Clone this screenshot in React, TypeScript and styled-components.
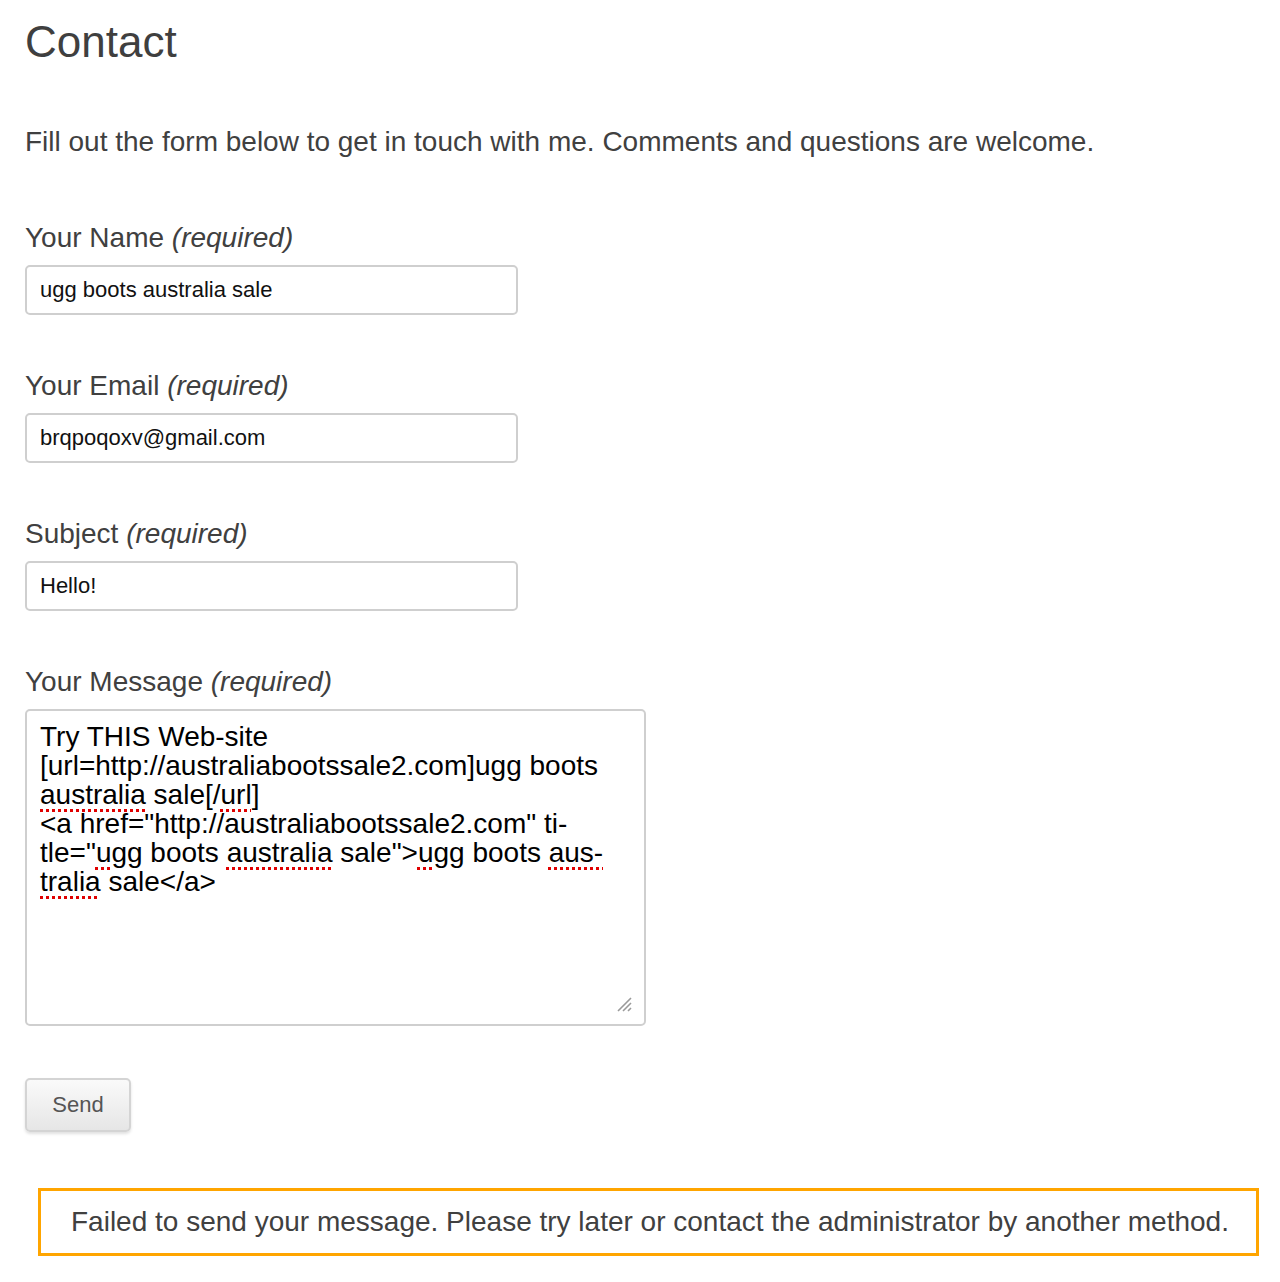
import React from "react";
import styled, { createGlobalStyle } from "styled-components";

const GlobalStyle = createGlobalStyle`
  html, body {
    margin: 0;
    padding: 0;
    background: #ffffff;
  }
  body {
    font-family: "Liberation Sans", Arial, Helvetica, sans-serif;
    color: #404040;
  }
`;

const Page = styled.main`
  padding: 14px 21px 20px 25px;
`;

const Title = styled.h1`
  margin: 0;
  font-size: 44px;
  line-height: 56px;
  font-weight: 400;
  color: #3f3f3f;
`;

const Intro = styled.p`
  margin: 56px 0 0;
  font-size: 28px;
  line-height: 32px;
  color: #404040;
`;

const Form = styled.form`
  margin-top: 64px;
  display: flex;
  flex-direction: column;
`;

const Field = styled.div`
  display: flex;
  flex-direction: column;
  align-items: flex-start;
  margin-bottom: 55px;
`;

const Label = styled.label`
  display: block;
  font-size: 28px;
  line-height: 32px;
  color: #404040;
  margin-bottom: 11px;
`;

const Req = styled.em`
  font-style: italic;
`;

const TextInput = styled.input`
  box-sizing: border-box;
  width: 493px;
  height: 50px;
  padding: 0 13px;
  border: 2px solid #cfcfcf;
  border-radius: 5px;
  background: #fff;
  font-family: "Liberation Sans", Arial, sans-serif;
  font-size: 22px;
  color: #111;
  outline: none;
`;

const MessageBox = styled.div`
  position: relative;
  box-sizing: border-box;
  width: 621px;
  height: 317px;
  padding: 11px 30px 8px 13px;
  border: 2px solid #cfcfcf;
  border-radius: 5px;
  background: #fff;
  font-size: 28px;
  line-height: 29px;
  color: #000;
  white-space: pre;
`;

const Misspelled = styled.span`
  text-decoration: underline dotted #e00000;
  text-decoration-thickness: 2.5px;
  text-underline-offset: 5px;
`;

const Grip = styled.svg`
  position: absolute;
  right: 12px;
  bottom: 12px;
  width: 20px;
  height: 20px;
`;

const SendButton = styled.button`
  align-self: flex-start;
  box-sizing: border-box;
  width: 106px;
  height: 54px;
  margin-top: -3px;
  border: 2px solid #d4d4d4;
  border-radius: 5px;
  background: linear-gradient(#fafafa, #e6e6e6);
  box-shadow: 0 2px 3px rgba(0, 0, 0, 0.12);
  font-family: "Liberation Sans", Arial, sans-serif;
  font-size: 22px;
  color: #555;
  cursor: pointer;
`;

const Alert = styled.div`
  box-sizing: border-box;
  margin: 56px 0 0 13px;
  height: 68px;
  border: 3px solid #ffa500;
  padding: 0 0 0 30px;
  display: flex;
  align-items: center;
  font-size: 28px;
  color: #404040;
  white-space: nowrap;
`;

export default function App() {
  return (
    <>
      <GlobalStyle />
      <Page>
        <Title>Contact</Title>
        <Intro>
          Fill out the form below to get in touch with me. Comments and questions are welcome.
        </Intro>
        <Form onSubmit={(e) => e.preventDefault()}>
          <Field>
            <Label htmlFor="name">
              Your Name <Req>(required)</Req>
            </Label>
            <TextInput id="name" defaultValue="ugg boots australia sale" />
          </Field>
          <Field>
            <Label htmlFor="email">
              Your Email <Req>(required)</Req>
            </Label>
            <TextInput id="email" defaultValue="brqpoqoxv@gmail.com" />
          </Field>
          <Field>
            <Label htmlFor="subject">
              Subject <Req>(required)</Req>
            </Label>
            <TextInput id="subject" defaultValue="Hello!" />
          </Field>
          <Field>
            <Label>
              Your Message <Req>(required)</Req>
            </Label>
            <MessageBox role="textbox" aria-multiline="true">
              {"Try THIS Web-site\n[url=http://australiabootssale2.com]ugg boots\n"}
              <Misspelled>australia</Misspelled>
              {" sale[/"}
              <Misspelled>url</Misspelled>
              {"]\n<a href=\"http://australiabootssale2.com\" ti-\ntle=\""}
              <Misspelled>ugg</Misspelled>
              {" boots "}
              <Misspelled>australia</Misspelled>
              {" sale\">"}
              <Misspelled>ugg</Misspelled>
              {" boots "}
              <Misspelled>aus-</Misspelled>
              {"\n"}
              <Misspelled>tralia</Misspelled>
              {" sale</a>"}
              <Grip viewBox="0 0 20 20" aria-hidden="true">
                <path d="M19 6 L6 19 M19 11 L11 19 M19 16 L16 19" stroke="#9a9a9a" strokeWidth="1.6" />
              </Grip>
            </MessageBox>
          </Field>
          <SendButton type="submit">Send</SendButton>
        </Form>
        <Alert role="alert">
          Failed to send your message. Please try later or contact the administrator by another method.
        </Alert>
      </Page>
    </>
  );
}
